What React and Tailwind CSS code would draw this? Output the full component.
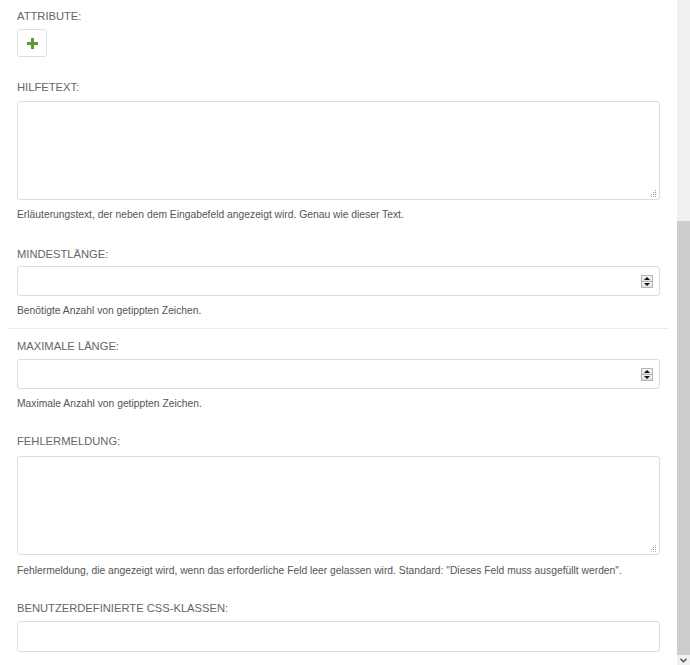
import React from 'react'

const FONT = { fontFamily: '"Liberation Sans", Arial, sans-serif' }

function Label({ children, className = '' }) {
  return (
    <div className={`text-[11.2px] leading-[14px] uppercase text-[#666] ${className}`}>{children}</div>
  )
}

function Help({ children, className = '' }) {
  return <div className={`text-[10.3px] leading-[12px] text-[#555] ${className}`}>{children}</div>
}

function Spinner() {
  return (
    <div className="absolute right-[7px] top-[9px] flex flex-col w-[12px]">
      <div className="h-[7px] border border-[#b4b4b4] bg-gradient-to-b from-[#f6f6f6] to-[#e0e0e0] flex items-center justify-center">
        <div className="w-0 h-0 border-l-[3px] border-r-[3px] border-b-[3px] border-l-transparent border-r-transparent border-b-[#111]" />
      </div>
      <div className="h-[7px] -mt-px border border-[#b4b4b4] bg-gradient-to-b from-[#f6f6f6] to-[#e0e0e0] flex items-center justify-center">
        <div className="w-0 h-0 border-l-[3px] border-r-[3px] border-t-[3px] border-l-transparent border-r-transparent border-t-[#111]" />
      </div>
    </div>
  )
}

function NumberInput({ className = '' }) {
  return (
    <div className={`relative ${className}`}>
      <input type="text" className="block w-full h-[30px] border border-[#dedede] rounded-[3px] bg-white outline-none" />
      <Spinner />
    </div>
  )
}

// textarea with the small dotted resize grip
function Textarea({ className = '' }) {
  return (
    <div className={`relative ${className}`}>
      <textarea className="block w-full h-[99px] resize-none border border-[#dedede] rounded-[3px] bg-white outline-none" />
      <svg className="absolute right-[3px] bottom-[3px]" width="7" height="7" viewBox="0 0 7 7">
        <rect x="5" y="0" width="1" height="1" fill="#9a9a9a" />
        <rect x="3" y="2" width="1" height="1" fill="#9a9a9a" />
        <rect x="5" y="2" width="1" height="1" fill="#9a9a9a" />
        <rect x="1" y="4" width="1" height="1" fill="#9a9a9a" />
        <rect x="3" y="4" width="1" height="1" fill="#9a9a9a" />
        <rect x="5" y="4" width="1" height="1" fill="#9a9a9a" />
        <rect x="1" y="6" width="1" height="1" fill="#b5b5b5" />
        <rect x="3" y="6" width="1" height="1" fill="#b5b5b5" />
        <rect x="5" y="6" width="1" height="1" fill="#b5b5b5" />
      </svg>
    </div>
  )
}

export default function App() {
  return (
    <div className="flex w-[690px] h-[665px] bg-white overflow-hidden" style={FONT}>
      <div className="flex-1 pt-[9px] px-[17px]">
        <Label>Attribute:</Label>
        <button
          type="button"
          className="mt-[6px] w-[30px] h-[28px] border border-[#dddddd] rounded-[3px] bg-white flex items-center justify-center"
        >
          <svg width="11" height="11" viewBox="0 0 11 11">
            <rect x="4" y="0" width="3" height="11" fill="#5b9a2f" />
            <rect x="0" y="4" width="11" height="3" fill="#5b9a2f" />
          </svg>
        </button>

        <Label className="mt-[23px]">Hilfetext:</Label>
        <Textarea className="mt-[7px]" />
        <Help className="mt-[9px]">
          Erläuterungstext, der neben dem Eingabefeld angezeigt wird. Genau wie dieser Text.
        </Help>

        <Label className="mt-[26px]">Mindestlänge:</Label>
        <NumberInput className="mt-[5px]" />
        <Help className="mt-[9px]">Benötigte Anzahl von getippten Zeichen.</Help>

        <div className="mt-[11px] -mx-[9px] h-px bg-[#ececec]" />

        <Label className="mt-[10px]">Maximale Länge:</Label>
        <NumberInput className="mt-[6px]" />
        <Help className="mt-[9px]">Maximale Anzahl von getippten Zeichen.</Help>

        <Label className="mt-[24px]">Fehlermeldung:</Label>
        <Textarea className="mt-[8px]" />
        <Help className="mt-[10px]">
          Fehlermeldung, die angezeigt wird, wenn das erforderliche Feld leer gelassen wird. Standard: "Dieses Feld muss ausgefüllt werden".
        </Help>

        <Label className="mt-[24px]">Benutzerdefinierte CSS-Klassen:</Label>
        <input type="text" className="mt-[6px] block w-full h-[31px] border border-[#dedede] rounded-[3px] bg-white outline-none" />
      </div>

      <div className="w-[13px] h-full bg-[#f0f0f0] flex flex-col">
        <div className="h-[221px]" />
        <div className="flex-1 bg-[#cdcdcd]" />
        <div className="h-[10px] flex items-center justify-center">
          <svg width="7" height="5" viewBox="0 0 7 5">
            <path d="M0.5 0.8 L3.5 3.8 L6.5 0.8" fill="none" stroke="#505050" strokeWidth="1.4" />
          </svg>
        </div>
      </div>
    </div>
  )
}
